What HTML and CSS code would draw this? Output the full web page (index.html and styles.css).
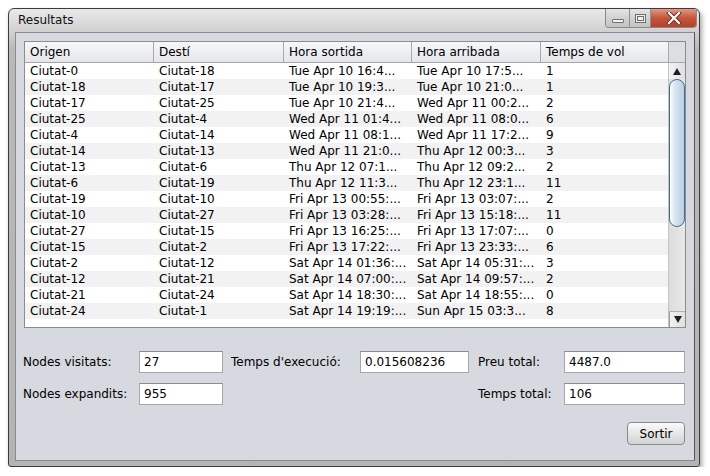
FILE: index.html
```html
<!DOCTYPE html>
<html>
<head>
<meta charset="utf-8">
<link rel="stylesheet" href="styles.css">
</head>
<body>
<div class="window">
  <div class="titlebar">
    <span class="title">Resultats</span>
    <div class="wbtns">
      <div class="wbtn min"><span class="min-glyph"></span></div>
      <div class="wbtn max"><span class="max-glyph"></span></div>
      <div class="wbtn close">
        <svg width="16" height="12" viewBox="0 0 16 12"><path d="M3 1 L13 11 M13 1 L3 11" stroke="#6b2a1c" stroke-width="4" stroke-linecap="square"/><path d="M3 1 L13 11 M13 1 L3 11" stroke="#ffffff" stroke-width="2.2" stroke-linecap="square"/></svg>
      </div>
    </div>
  </div>
  <div class="content">
    <div class="pane">
      <div class="head">
        <div class="hcell">Origen</div>
        <div class="hcell sep">Destí</div>
        <div class="hcell sep">Hora sortida</div>
        <div class="hcell sep">Hora arribada</div>
        <div class="hcell sep">Temps de vol</div>
        <div class="hcorner"></div>
      </div>
      <div class="viewport">
        <div class="rows">
          <div class="row"><span>Ciutat-0</span><span>Ciutat-18</span><span>Tue Apr 10 16:4...</span><span>Tue Apr 10 17:5...</span><span>1</span></div>
          <div class="row"><span>Ciutat-18</span><span>Ciutat-17</span><span>Tue Apr 10 19:3...</span><span>Tue Apr 10 21:0...</span><span>1</span></div>
          <div class="row"><span>Ciutat-17</span><span>Ciutat-25</span><span>Tue Apr 10 21:4...</span><span>Wed Apr 11 00:2...</span><span>2</span></div>
          <div class="row"><span>Ciutat-25</span><span>Ciutat-4</span><span>Wed Apr 11 01:4...</span><span>Wed Apr 11 08:0...</span><span>6</span></div>
          <div class="row"><span>Ciutat-4</span><span>Ciutat-14</span><span>Wed Apr 11 08:1...</span><span>Wed Apr 11 17:2...</span><span>9</span></div>
          <div class="row"><span>Ciutat-14</span><span>Ciutat-13</span><span>Wed Apr 11 21:0...</span><span>Thu Apr 12 00:3...</span><span>3</span></div>
          <div class="row"><span>Ciutat-13</span><span>Ciutat-6</span><span>Thu Apr 12 07:1...</span><span>Thu Apr 12 09:2...</span><span>2</span></div>
          <div class="row"><span>Ciutat-6</span><span>Ciutat-19</span><span>Thu Apr 12 11:3...</span><span>Thu Apr 12 23:1...</span><span>11</span></div>
          <div class="row"><span>Ciutat-19</span><span>Ciutat-10</span><span>Fri Apr 13 00:55:...</span><span>Fri Apr 13 03:07:...</span><span>2</span></div>
          <div class="row"><span>Ciutat-10</span><span>Ciutat-27</span><span>Fri Apr 13 03:28:...</span><span>Fri Apr 13 15:18:...</span><span>11</span></div>
          <div class="row"><span>Ciutat-27</span><span>Ciutat-15</span><span>Fri Apr 13 16:25:...</span><span>Fri Apr 13 17:07:...</span><span>0</span></div>
          <div class="row"><span>Ciutat-15</span><span>Ciutat-2</span><span>Fri Apr 13 17:22:...</span><span>Fri Apr 13 23:33:...</span><span>6</span></div>
          <div class="row"><span>Ciutat-2</span><span>Ciutat-12</span><span>Sat Apr 14 01:36:...</span><span>Sat Apr 14 05:31:...</span><span>3</span></div>
          <div class="row"><span>Ciutat-12</span><span>Ciutat-21</span><span>Sat Apr 14 07:00:...</span><span>Sat Apr 14 09:57:...</span><span>2</span></div>
          <div class="row"><span>Ciutat-21</span><span>Ciutat-24</span><span>Sat Apr 14 18:30:...</span><span>Sat Apr 14 18:55:...</span><span>0</span></div>
          <div class="row"><span>Ciutat-24</span><span>Ciutat-1</span><span>Sat Apr 14 19:19:...</span><span>Sun Apr 15 03:3...</span><span>8</span></div>
        </div>
        <div class="vscroll">
          <div class="arrow up"></div>
          <div class="track"><div class="thumb"></div></div>
          <div class="arrow down"></div>
        </div>
      </div>
    </div>
    <div class="form">
      <label class="lbl">Nodes visitats:</label>
      <div class="field">27</div>
      <label class="lbl l2">Temps d'execució:</label>
      <div class="field">0.015608236</div>
      <label class="lbl l3">Preu total:</label>
      <div class="field">4487.0</div>
      <label class="lbl">Nodes expandits:</label>
      <div class="field">955</div>
      <div></div>
      <div></div>
      <label class="lbl l3">Temps total:</label>
      <div class="field">106</div>
    </div>
    <div class="actions">
      <button class="btn">Sortir</button>
    </div>
  </div>
</div>
</body>
</html>
```
FILE: styles.css
```css
* { box-sizing: border-box; }
body {
  margin: 0;
  background: #ffffff;
  font-family: "DejaVu Sans", sans-serif;
  font-size: 12px;
  color: #000;
}
.window {
  margin: 8px 0 0 8px;
  width: 692px;
  height: 459px;
  border: 1px solid #3c3c3c;
  border-radius: 6px 6px 3px 3px;
  background: linear-gradient(to bottom, #e9e9e9 0px, #cfcfcf 24px, #b9b9b9 40px, #b4b4b4 100%);
  box-shadow: 2px 3px 5px rgba(0,0,0,0.35);
  padding: 0 4px 5px 6px;
  display: flex;
  flex-direction: column;
}
.titlebar {
  height: 23px;
  display: flex;
  align-items: flex-start;
  justify-content: space-between;
}
.title {
  padding: 4px 0 0 3px;
  color: #111;
}
.wbtns {
  display: flex;
  margin-right: -2px;
  border: 1px solid #8a8a8a;
  border-top: none;
  border-radius: 0 0 4px 4px;
  overflow: hidden;
  height: 19px;
}
.wbtn {
  height: 18px;
  display: flex;
  align-items: center;
  justify-content: center;
  background: linear-gradient(to bottom, #e4e4e4, #c2c2c2);
  border-right: 1px solid #909090;
}
.wbtn.min { width: 24px; }
.wbtn.max { width: 21px; }
.wbtn.close {
  width: 45px;
  border-right: none;
  background: linear-gradient(to bottom, #e29a86, #c4553b 50%, #b2412a);
}
.min-glyph {
  width: 12px; height: 4px;
  margin-top: 6px;
  background: #f4f4f4;
  border: 1px solid #6e6e6e;
  border-radius: 1px;
}
.max-glyph {
  width: 11px; height: 9px;
  border: 1px solid #6e6e6e;
  background: #f0f0f0;
  box-shadow: inset 0 0 0 1px #f0f0f0, inset 0 0 0 2px #6e6e6e;
}
.content {
  flex: 1;
  background: #d6d9df;
  border-top: 1px solid #8a8a8a;
  border-left: 1px solid #8a8a8a;
  border-right: 1px solid #555;
  border-bottom: 1px solid #8a8a8a;
  padding: 8px 9px 14px 7px;
  display: flex;
  flex-direction: column;
}
.pane {
  margin-left: 1px;
  width: 662px;
  border: 1px solid #8c8c8c;
  background: #fff;
}
.head {
  display: grid;
  grid-template-columns: 128px 130px 128px 129px 128px 17px;
  height: 21px;
  background: linear-gradient(to bottom, #f6f7f8, #e4e6ea);
  border-bottom: 1px solid #a6a6a6;
}
.hcell {
  padding: 3px 0 0 5px;
  white-space: nowrap;
}
.hcell.sep { border-left: 1px solid #a9a9a9; }
.hcorner {
  border-left: 1px solid #a9a9a9;
  background: #dcdee2;
}
.viewport {
  display: flex;
  height: 264px;
}
.rows {
  width: 643px;
}
.row {
  display: grid;
  grid-template-columns: 128px 130px 128px 129px 128px;
  height: 16px;
  line-height: 16px;
  background: #ffffff;
}
.row:nth-child(even) { background: #f2f2f2; }
.row span {
  padding-left: 6px;
  white-space: nowrap;
  overflow: hidden;
}
.row span:first-child { padding-left: 5px; }
.vscroll {
  width: 17px;
  display: flex;
  flex-direction: column;
  border-left: 1px solid #c4c4c4;
  background: linear-gradient(to right, #dcdcdc, #e8e8e8);
}
.arrow {
  height: 16px;
  display: flex;
  align-items: center;
  justify-content: center;
  background: linear-gradient(to right, #f2f2f2, #e0e0e0);
  position: relative;
}
.arrow::after {
  content: "";
  width: 0; height: 0;
  border-left: 4px solid transparent;
  border-right: 4px solid transparent;
}
.arrow.up::after { border-bottom: 7px solid #1e1e1e; }
.arrow.down::after { border-top: 7px solid #1e1e1e; }
.arrow.down { border-left: 1px solid #9a9a9a; border-top: 1px solid #b0b0b0; }
.track {
  flex: 1;
}
.thumb {
  height: 148px;
  margin-left: 0px;
  width: 16px;
  border: 1px solid #4a6a88;
  border-radius: 8px;
  background: linear-gradient(to right, #ffffff 0%, #dce8f3 30%, #b7cfe6 100%);
}
.form {
  margin-top: 23px;
  display: grid;
  grid-template-columns: 116px 84px 137px 109px 95px 121px;
  grid-auto-rows: 22px;
  row-gap: 10px;
  align-items: center;
}
.lbl { white-space: nowrap; }
.l2 { padding-left: 8px; }
.l3 { padding-left: 9px; }
.field {
  height: 22px;
  background: #fff;
  border: 1px solid #a6a6a6;
  border-top-color: #8e8e8e;
  padding: 3px 0 0 4px;
  white-space: nowrap;
}
.actions {
  margin-top: 17px;
  display: flex;
  justify-content: flex-end;
}
.btn {
  width: 58px;
  height: 23px;
  font-family: "DejaVu Sans", sans-serif;
  font-size: 12px;
  color: #000;
  border: 1px solid #8a8a8a;
  border-radius: 4px;
  background: linear-gradient(to bottom, #fbfbfb, #e2e2e2 60%, #d2d2d2);
  padding: 0;
}
```
